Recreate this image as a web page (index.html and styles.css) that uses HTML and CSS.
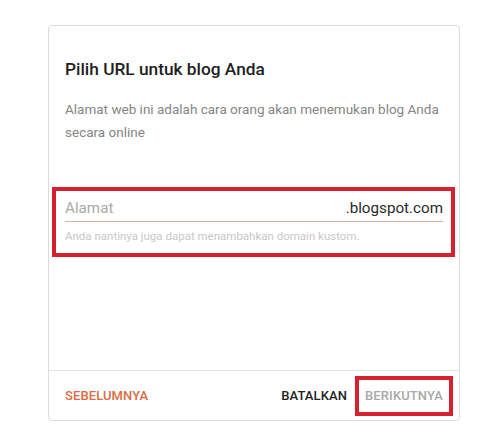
FILE: index.html
```html
<!DOCTYPE html>
<html lang="id">
<head>
    <meta charset="UTF-8">
    <meta name="viewport" content="width=device-width, initial-scale=1.0">
    <title>Pilih URL untuk blog Anda</title>
    <link rel="stylesheet" href="styles.css">
</head>
<body>

    <!-- Dialog -->
    <div class="page">
        <div class="card">
            <div class="card-body">
                <h2 class="title">Pilih URL untuk blog Anda</h2>
                <p class="desc">Alamat web ini adalah cara orang akan menemukan blog Anda secara online</p>

                <div class="field mark">
                    <div class="field-row">
                        <span class="placeholder">Alamat</span>
                        <span class="suffix">.blogspot.com</span>
                    </div>
                    <p class="hint">Anda nantinya juga dapat menambahkan domain kustom.</p>
                </div>
            </div>

            <!-- Footer -->
            <div class="card-footer">
                <a href="#" class="btn btn-prev">Sebelumnya</a>
                <div class="actions">
                    <a href="#" class="btn btn-cancel">Batalkan</a>
                    <a href="#" class="btn btn-next mark">Berikutnya</a>
                </div>
            </div>
        </div>
    </div>

</body>
</html>
```

FILE: styles.css
```css
/* General Styles */
body {
    margin: 0;
    padding: 0;
    background-color: #fff;
    font-family: Roboto, "Liberation Sans", Arial, sans-serif;
}

.page {
    padding: 25px 0 0 48px;
}

/* Card */
.card {
    width: 412px;
    height: 396px;
    box-sizing: border-box;
    border: 1px solid #dcdcdc;
    border-radius: 4px;
    box-shadow: 0 1px 2px rgba(0, 0, 0, 0.04);
    display: flex;
    flex-direction: column;
}

.card-body {
    flex: 1;
    padding: 31px 16px 0;
}

.title {
    margin: 0;
    font-size: 17.3px;
    font-weight: 500;
    line-height: 24px;
    color: #212121;
}

.desc {
    margin: 17px 0 0;
    font-size: 13.5px;
    line-height: 23px;
    color: #858585;
}

/* Annotation box */
.mark {
    border: 4px solid #d7202e;
}

/* Address field */
.field {
    margin: 43px -12px 0 -13px;
    padding: 5px 8px 9px 9px;
}

.field-row {
    display: flex;
    justify-content: space-between;
    align-items: center;
    height: 24px;
    padding-bottom: 1px;
    border-bottom: 1px solid #d5b4a1;
    font-size: 15.2px;
}

.placeholder {
    color: #a9a9a9;
}

.suffix {
    color: #2a2a2a;
}

.hint {
    margin: 6px 0 0;
    font-size: 11.5px;
    line-height: 16px;
    color: #c8c8c8;
}

/* Footer */
.card-footer {
    height: 49px;
    border-top: 1px solid #e3e3e3;
    padding: 0 6px 0 16px;
    display: flex;
    justify-content: space-between;
    align-items: center;
}

.actions {
    display: flex;
    align-items: center;
    gap: 8px;
}

.btn {
    font-size: 13px;
    font-weight: 500;
    text-transform: uppercase;
    text-decoration: none;
    letter-spacing: 0.1px;
}

.btn-prev {
    color: #dc6a44;
}

.btn-cancel {
    color: #222;
}

.btn-next {
    color: #a8a8a8;
    height: 40px;
    box-sizing: border-box;
    line-height: 32px;
    padding: 0 6px;
}
```
